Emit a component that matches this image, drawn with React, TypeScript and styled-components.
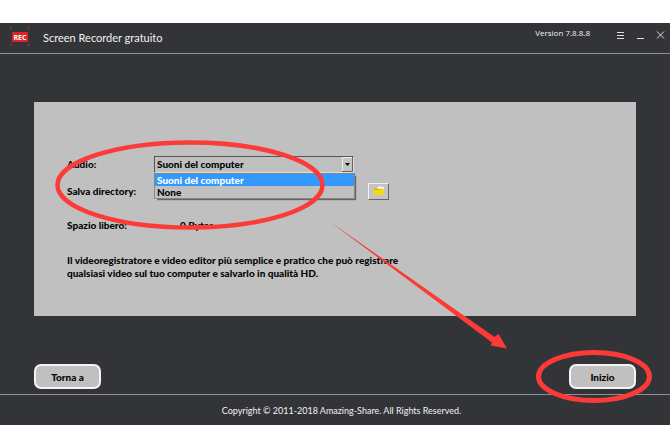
import React from "react";
import styled, { createGlobalStyle } from "styled-components";

const GlobalStyle = createGlobalStyle`
  * { box-sizing: border-box; }
  body { margin: 0; background: #fff; font-family: Lato, "Open Sans", sans-serif; }
  button, input, select { font: inherit; color: inherit; }
`;

const AppWindow = styled.main`
  position: relative;
  margin: 23px 0 22px;
  background: #333438;
  color: #f2f2f2;
`;

const TitleBar = styled.header`
  display: flex;
  align-items: flex-start;
  height: 31px;
  padding: 0 5px 0 10px;
  border-bottom: 1px solid #8f9092;
`;

const Logo = styled.svg`
  margin-top: 4px;
  flex: none;
`;

const Title = styled.h1`
  flex: 1;
  margin: 7px 0 0 13px;
  font-size: 11px;
  line-height: 16px;
  font-weight: 400;
`;

const Version = styled.span`
  margin-top: 3px;
  font-family: "Open Sans", sans-serif;
  font-size: 8px;
  line-height: 14px;
`;

const WindowControls = styled.div`
  display: flex;
  gap: 10px;
  margin: 7px 0 0 25px;
`;

const ControlButton = styled.button`
  display: flex;
  width: 10px;
  height: 10px;
  padding: 0;
  border: 0;
  background: none;
`;

const Content = styled.div`
  padding: 48px 34px 0;
`;

const Panel = styled.section`
  padding: 52px 33px 36px;
  background: #c0c0c0;
  color: #050505;
  font-size: 10px;
  font-weight: 900;
`;

const Row = styled.div<{ $gap?: number }>`
  display: grid;
  grid-template-columns: 87px 201px auto;
  justify-content: start;
  align-items: center;
  height: 20px;
  margin-top: ${(p) => p.$gap ?? 0}px;
`;

const Dropdown = styled.div`
  position: relative;
  height: 17px;
  margin-right: 1px;
`;

const Select = styled.select`
  display: block;
  appearance: none;
  width: 100%;
  height: 17px;
  padding: 0 14px 0 2px;
  border: 1px solid;
  border-color: #555 #ddd #ddd #555;
  border-radius: 0;
  background: #c0c0c0;
  outline: 0;
`;

const DropArrow = styled.svg`
  position: absolute;
  top: 1px;
  right: 1px;
  pointer-events: none;
`;

const Options = styled.ul`
  position: absolute;
  z-index: 1;
  top: 100%;
  left: 0;
  right: -1px;
  margin: 0;
  padding: 0;
  list-style: none;
  border: 1px solid #858585;
  background: #c0c0c0;
  box-shadow: 2px 2px 1px -1px #666;
`;

const Option = styled.li<{ $selected?: boolean }>`
  height: 12px;
  padding-left: 2px;
  line-height: 12px;
  background: ${(p) => (p.$selected ? "#3399ff" : "transparent")};
  color: ${(p) => (p.$selected ? "#fff" : "inherit")};
`;

const PathInput = styled.input`
  width: 100%;
  height: 18px;
  border: 1px solid;
  border-color: #777 #eee #eee #777;
  background: #c0c0c0;
`;

const FolderButton = styled.button`
  display: grid;
  place-items: center;
  width: 21px;
  height: 17px;
  margin-left: 13px;
  padding: 0;
  border: 1px solid;
  border-color: #f0f0f0 #666 #666 #f0f0f0;
  background: #c4c4c4;
`;

const FreeSpace = styled.output`
  padding-left: 26px;
`;

const Description = styled.p`
  max-width: 360px;
  margin: 19px 0 0;
  line-height: 13px;
`;

const Actions = styled.div`
  display: flex;
  justify-content: space-between;
  padding: 48px 0 5px;
`;

const ActionButton = styled.button`
  width: 67px;
  height: 25px;
  padding: 0;
  border: 2px solid #f4f4f4;
  border-radius: 7px;
  background: #c0c0c0;
  color: #050505;
  font-size: 10px;
  font-weight: 900;
`;

const Footer = styled.footer`
  height: 31px;
  border-top: 1px solid #8f9092;
  padding: 8px 13px 0 26px;
  text-align: center;
  font-size: 9px;
  line-height: 16px;
`;

const Annotations = styled.svg`
  position: absolute;
  z-index: 2;
  inset: 0;
  width: 100%;
  height: 100%;
  pointer-events: none;
`;

export default function App() {
  return (
    <>
      <GlobalStyle />
      <AppWindow>
        <TitleBar>
          <Logo width="20" height="20" viewBox="0 0 20 20" aria-label="REC">
            <path d="M.5 3V.5h2M17 .5h2V3M.5 16v2.500h2M17 18.500h2V16" fill="none" stroke="#a0292d" />
            <rect x="2" y="5" width="16" height="10" fill="#da2524" />
            <text x="10" y="13" textAnchor="middle" fontFamily="Open Sans, sans-serif" fontSize="7" fontWeight="700" fill="#fff">REC</text>
          </Logo>
          <Title>Screen Recorder gratuito</Title>
          <Version>Version 7.8.8.8</Version>
          <WindowControls>
            <ControlButton aria-label="Menu">
              <svg width="10" height="10"><path d="M2 2.5h7M2 5.5h7M2 8.5h7" stroke="#ddd" /></svg>
            </ControlButton>
            <ControlButton aria-label="Minimize">
              <svg width="10" height="10"><path d="M2 8.5h7" stroke="#ddd" /></svg>
            </ControlButton>
            <ControlButton aria-label="Close">
              <svg width="10" height="10"><path d="M2 1.5l7 7M9 1.5l-7 7" stroke="#ddd" /></svg>
            </ControlButton>
          </WindowControls>
        </TitleBar>

        <Content>
          <Panel>
            <Row>
              <label htmlFor="audio">Audio:</label>
              <Dropdown>
                <Select id="audio" defaultValue="computer">
                  <option value="computer">Suoni del computer</option>
                  <option value="none">None</option>
                </Select>
                <DropArrow width="11" height="15" viewBox="0 0 11 15">
                  <path d="M0 0h11v15H0z" fill="#c4c4c4" />
                  <path d="M.5 14V.5H10" fill="none" stroke="#eee" />
                  <path d="M10.5 0v14.5H0" fill="none" stroke="#666" />
                  <path d="M3 6h5L5.5 9z" fill="#000" />
                </DropArrow>
                <Options role="listbox" aria-label="Audio">
                  <Option role="option" aria-selected="true" $selected>Suoni del computer</Option>
                  <Option role="option" aria-selected="false">None</Option>
                </Options>
              </Dropdown>
            </Row>
            <Row $gap={7}>
              <label htmlFor="directory">Salva directory:</label>
              <PathInput id="directory" type="text" />
              <FolderButton aria-label="Salva directory">
                <svg width="12" height="10" viewBox="0 0 12 10">
                  <path d="M3 2l4-2 4 1v4H3z" fill="#f5eddc" />
                  <path d="M1 2h3l1 1h5v6H1z" fill="#d9bd00" />
                  <path d="M0 4h8l1-1h3l-2 6H1z" fill="#f3da12" />
                </svg>
              </FolderButton>
            </Row>
            <Row $gap={14}>
              <label htmlFor="free-space">Spazio libero:</label>
              <FreeSpace id="free-space">0 Bytes</FreeSpace>
            </Row>
            <Description>
              Il videoregistratore e video editor più semplice e pratico che può registrare
              qualsiasi video sul tuo computer e salvarlo in qualità HD.
            </Description>
          </Panel>
          <Actions>
            <ActionButton>Torna a</ActionButton>
            <ActionButton>Inizio</ActionButton>
          </Actions>
        </Content>
        <Footer>Copyright © 2011-2018 Amazing-Share. All Rights Reserved.</Footer>

        <Annotations viewBox="0 0 670 402" preserveAspectRatio="none" aria-hidden="true">
          <g fill="none" stroke="#fc3b39">
            <ellipse cx="190" cy="162" rx="132.5" ry="42.5" strokeWidth="4.5" />
            <ellipse cx="594" cy="353.5" rx="55.5" ry="24" strokeWidth="5" />
          </g>
          <path d="M329 198L494.500 314L498.500 311L507 325.500L490.500 322.500L492 319.500z" fill="#fc3b39" />
        </Annotations>
      </AppWindow>
    </>
  );
}
